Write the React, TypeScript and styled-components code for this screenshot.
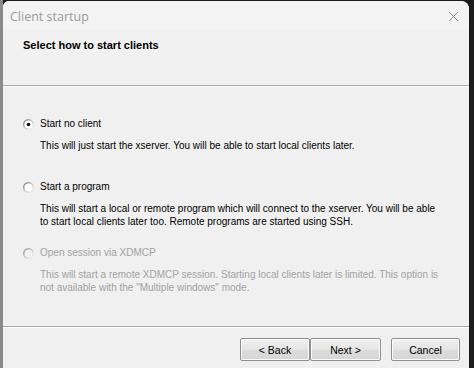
import React from "react";
import styled, { createGlobalStyle } from "styled-components";

const GlobalStyle = createGlobalStyle`
  html, body {
    margin: 0;
    padding: 0;
    background: #2b2b2b;
  }
  * {
    box-sizing: border-box;
  }
`;

const Desktop = styled.div`
  width: 474px;
  height: 368px;
  display: flex;
  padding: 1px 5px 0 3px;
  background: linear-gradient(to right, #8a8a8a 0, #8a8a8a 3px, #1c1c1c 3px);
`;

const Window = styled.div`
  flex: 1;
  display: flex;
  flex-direction: column;
  background: #f0f0f0;
  border-top-left-radius: 6px;
  border-top-right-radius: 8px;
  overflow: hidden;
  font-family: "Liberation Sans", Arial, sans-serif;
  font-size: 10px;
  color: #000;
`;

const TitleBar = styled.div`
  height: 29px;
  display: flex;
  align-items: center;
  justify-content: space-between;
  padding: 1px 10px 0 7px;
  background: #f3f3f3;
`;

const TitleText = styled.span`
  font-family: "Open Sans", "Noto Sans", sans-serif;
  font-size: 12.5px;
  color: #9b9b9b;
`;

const Header = styled.div`
  height: 56px;
  padding: 8px 0 0 20px;
  background: #f1f1f1;
  border-bottom: 1px solid #a9a9a9;
  box-shadow: 0 1px 0 #ffffff;
`;

const HeaderTitle = styled.div`
  font-weight: bold;
  font-size: 11px;
  line-height: 14px;
`;

const Content = styled.div`
  flex: 1;
  display: flex;
  flex-direction: column;
  padding: 1px 0 0 19px;
`;

const Option = styled.div<{ $gap: number }>`
  margin-top: ${(p) => p.$gap}px;
  display: flex;
  flex-direction: column;
`;

const LabelRow = styled.label<{ $disabled?: boolean }>`
  display: flex;
  align-items: center;
  gap: 5px;
  height: 14px;
  line-height: 14px;
  color: ${(p) => (p.$disabled ? "#a2a2a2" : "#000")};
`;

const Description = styled.div<{ $disabled?: boolean }>`
  margin: 8px 0 0 18px;
  line-height: 13px;
  color: ${(p) => (p.$disabled ? "#a2a2a2" : "#000")};
  width: 430px;
`;

const Footer = styled.div`
  height: 42px;
  display: flex;
  align-items: flex-start;
  justify-content: flex-end;
  padding: 11px 9px 0 0;
  border-top: 1px solid #a9a9a9;
  box-shadow: inset 0 1px 0 #ffffff;
`;

const Button = styled.button<{ $w: number; $space?: number }>`
  width: ${(p) => p.$w}px;
  height: 23px;
  margin-left: ${(p) => p.$space ?? 0}px;
  font-family: "Liberation Sans", Arial, sans-serif;
  font-size: 10.5px;
  color: #000;
  background: linear-gradient(#f2f2f2, #e4e4e4 50%, #dcdcdc 51%, #d6d6d6);
  border: 1px solid #8e8e8e;
  border-radius: 2px;
  box-shadow: inset 0 0 0 1px #fbfbfb;
  padding: 0;
`;

const Radio: React.FC<{ checked?: boolean; disabled?: boolean }> = ({
  checked,
  disabled,
}) => {
  const id = `rg${checked ? 1 : 0}${disabled ? 1 : 0}`;
  return (
    <svg width="13" height="13" viewBox="0 0 13 13">
      <defs>
        <linearGradient id={id} x1="0" y1="0" x2="1" y2="1">
          <stop offset="0" stopColor={disabled ? "#8a8a8a" : "#6e6e6e"} />
          <stop offset="0.5" stopColor="#c8c8c8" />
          <stop offset="1" stopColor="#ffffff" />
        </linearGradient>
      </defs>
      <circle cx="6.5" cy="6.5" r="5.5" fill={`url(#${id})`} />
      <circle cx="6.5" cy="6.5" r="4" fill={disabled ? "#f0f0f0" : "#ffffff"} />
      {checked && <circle cx="6.5" cy="6.5" r="1.8" fill="#111" />}
    </svg>
  );
};

const CloseIcon = () => (
  <svg width="11" height="11" viewBox="0 0 11 11">
    <path d="M1 1 L10 10 M10 1 L1 10" stroke="#8e8e8e" strokeWidth="1" />
  </svg>
);

export default function App() {
  return (
    <>
      <GlobalStyle />
      <Desktop>
        <Window>
          <TitleBar>
            <TitleText>Client startup</TitleText>
            <CloseIcon />
          </TitleBar>
          <Header>
            <HeaderTitle>Select how to start clients</HeaderTitle>
          </Header>
          <Content>
            <Option $gap={30}>
              <LabelRow>
                <Radio checked />
                Start no client
              </LabelRow>
              <Description>
                This will just start the xserver. You will be able to start local clients later.
              </Description>
            </Option>
            <Option $gap={28}>
              <LabelRow>
                <Radio />
                Start a program
              </LabelRow>
              <Description>
                This will start a local or remote program which will connect to the xserver. You will be able
                <br />
                to start local clients later too. Remote programs are started using SSH.
              </Description>
            </Option>
            <Option $gap={18}>
              <LabelRow $disabled>
                <Radio disabled />
                Open session via XDMCP
              </LabelRow>
              <Description $disabled>
                This will start a remote XDMCP session. Starting local clients later is limited. This option is
                <br />
                not available with the "Multiple windows" mode.
              </Description>
            </Option>
          </Content>
          <Footer>
            <Button $w={70}>&lt; Back</Button>
            <Button $w={71}>Next &gt;</Button>
            <Button $w={69} $space={10}>
              Cancel
            </Button>
          </Footer>
        </Window>
      </Desktop>
    </>
  );
}
